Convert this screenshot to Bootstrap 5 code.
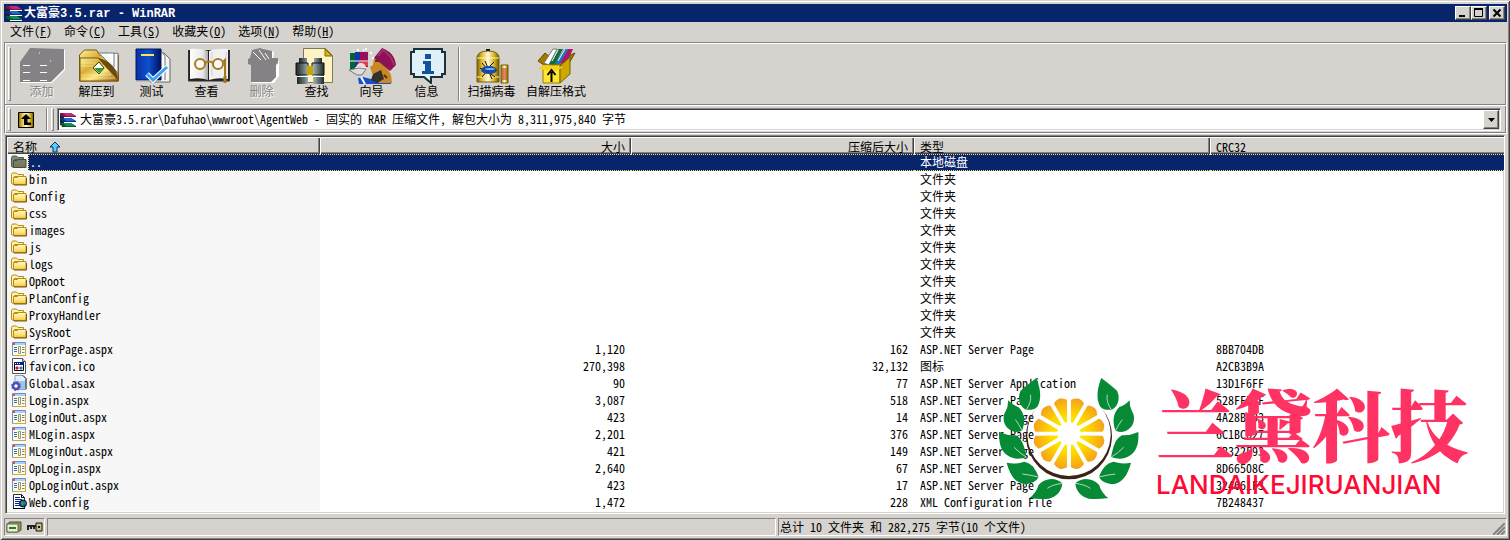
<!DOCTYPE html>
<html lang="zh-CN">
<head>
<meta charset="utf-8">
<meta name="viewport" content="width=device-width, initial-scale=1">
<title>大富豪3.5.rar - WinRAR</title>
<link href="https://cdn.jsdelivr.net/npm/bootstrap@5.3.0/dist/css/bootstrap.min.css" rel="stylesheet">
<style>
:root{--face:#d6d3ce;--navy:#08246b;--shade:#848284;--dark:#424142}
body{font-family:"Noto Sans Mono CJK SC","Liberation Mono","Noto Sans CJK SC",monospace;font-size:12px;line-height:17px;color:#000;background:var(--face)}
svg{display:block;flex:none}
.window{background:var(--face);padding:4px 3px 4px 4px;box-shadow:inset 1px 1px var(--face),inset -1px -1px var(--dark),inset 2px 2px #fff,inset -2px -2px var(--shade)}
.titlebar{background:var(--navy);color:#fff;height:18px;padding:0 2px;gap:2px}
.titlebar h1{font-size:12px;line-height:18px;font-weight:700}
.titlebar h1 span{font-family:"Liberation Mono",monospace}
.raised{background:var(--face);border:1px solid;border-color:#fff var(--dark) var(--dark) #fff;box-shadow:inset -1px -1px var(--shade);padding:0;border-radius:0;color:#000}
.winbtn{width:16px;height:14px}
.winbtn.shut{margin-left:2px}
.menubar{height:20px}
.menubar a{color:#000;text-decoration:none;padding:0 6px;line-height:18px;white-space:pre}
.rebar{border:1px solid;border-color:var(--shade) #fff #fff var(--shade);box-shadow:inset 1px 1px #fff,inset -1px -1px var(--shade)}
.grip{width:3px;border:1px solid;border-color:#fff var(--shade) var(--shade) #fff;flex:none}
.toolband{height:62px;padding:4px 3px 3px;border-bottom:1px solid var(--shade)}
.toolband .grip{margin-right:3px}
.tool{width:55px;padding:1px 0 0;border:0;background:none;color:#000;display:flex;flex-direction:column;align-items:center;line-height:14px}
.tool:disabled{color:var(--shade);text-shadow:1px 1px #fff}
.tool.sfx{width:74px}
.toolsep{width:2px;border-left:1px solid var(--shade);border-right:1px solid #fff;margin:0 4px}
.addrband{height:28px;padding:2px 5px 2px 3px;border-top:1px solid #fff}
.up{border:0;background:none;padding:0 7px}
.bandend{width:2px;border-left:1px solid var(--shade);border-right:1px solid #fff;margin:0 3px 0 5px}
.sunken{border:1px solid;border-color:var(--shade) #fff #fff var(--shade);box-shadow:inset 1px 1px var(--dark),inset -1px -1px var(--face)}
.addr{background:#fff;padding:1px 1px 1px 2px;margin-left:3px}
.addr select{appearance:none;border:0;background:transparent;padding:0 4px 2px;color:#000;outline:0;height:18px;line-height:16px}
.drop{width:16px;display:flex;align-items:center;justify-content:center}
.list{background:#fff;margin:1px 2px 0 1px;padding:1px 0 0 1px;overflow:hidden}
.files{table-layout:fixed;margin:0;color:#000;border-collapse:separate;border-spacing:0}
.files.table>:not(caption)>*>*{padding:0 6px;line-height:15px;height:17px;border:0;box-shadow:none;color:#000;white-space:pre}
.files.table>thead>tr>th{background:var(--face);font-weight:400;box-shadow:inset 1px 1px #fff,inset -1px -1px var(--dark),inset -2px -2px var(--shade)}
.files.table>thead>tr>th:last-child{box-shadow:inset 1px 1px #fff,inset 0 -1px var(--dark),inset 0 -2px var(--shade)}
.files.table>tbody>tr>td:first-child{background:#f7f7f7;padding:0 0 0 4px}
.files tbody td:first-child>div{display:flex;height:17px}
.files tbody td:first-child svg{margin-right:1px}
.files tbody td:first-child span{flex:1;padding-left:1px}
.files.table>tbody>tr.chosen>td:not(:first-child),.files .chosen td:first-child span{background:var(--navy);border-top:1px dotted #ffdf63;border-bottom:1px dotted #ffdf63;line-height:13px;color:#fff}
.files .chosen td:first-child span{border-left:1px dotted #ffdf63}
.statusbar{margin-top:4px;gap:2px}
.pane{border:1px solid;border-color:var(--shade) #fff #fff var(--shade);height:18px;line-height:15px;padding:0 1px}
.brand{position:absolute;right:36px;bottom:10px;display:flex;gap:17px;pointer-events:none}
.brand strong{display:block;font-family:"Noto Serif CJK SC","Noto Sans CJK SC",serif;font-weight:900;font-size:78px;line-height:90px;color:#ff3363}
.brand em{display:block;font-family:Inter,sans-serif;font-style:normal;font-weight:500;font-size:26px;line-height:36px;color:#ff0a35}
</style>
</head>
<body>
<svg width="0" height="0" class="position-absolute" aria-hidden="true">
<defs>
<linearGradient id="gold" x2="1" y2="1"><stop stop-color="#fff3a0"/><stop offset=".35" stop-color="#d8ac35"/><stop offset=".6" stop-color="#ffe681"/><stop offset="1" stop-color="#8b5b0a"/></linearGradient>
<linearGradient id="can"><stop stop-color="#7b6100"/><stop offset=".2" stop-color="#d9b62a"/><stop offset=".5" stop-color="#fffbe0"/><stop offset=".8" stop-color="#d4ad16"/><stop offset="1" stop-color="#6d5200"/></linearGradient>
<linearGradient id="tube"><stop stop-color="#222"/><stop offset=".3" stop-color="#6f8082"/><stop offset=".5" stop-color="#ccd8d8"/><stop offset="1" stop-color="#1e2a2c"/></linearGradient>
<linearGradient id="blue"><stop stop-color="#0830a0"/><stop offset=".5" stop-color="#1050d0"/><stop offset="1" stop-color="#001060"/></linearGradient>
<linearGradient id="fold" x2="0" y2="1"><stop stop-color="#fffbc8"/><stop offset=".6" stop-color="#ffe27a"/><stop offset="1" stop-color="#f2c440"/></linearGradient>
<linearGradient id="leafpage"><stop stop-color="#fff"/><stop offset=".7" stop-color="#e8e8e8"/><stop offset="1" stop-color="#aaa"/></linearGradient>
<radialGradient id="juice" gradientUnits="userSpaceOnUse" cx="0" cy="0" r="112"><stop offset=".2" stop-color="#fff200"/><stop offset=".55" stop-color="#ffd400"/><stop offset="1" stop-color="#f39c1f"/></radialGradient>
<symbol id="i-rar" viewBox="0 0 16 16"><path d="M3 4v11M1 3v10" stroke="#222" stroke-width="2"/><path d="M0 1h11l5 3v1H4L0 3z" fill="#8c0c52"/><path d="M3 1h8l4 3H6z" fill="#b5307a"/><path d="M0 6h11l5 3v1H4L0 8z" fill="#08308c"/><path d="M3 6h8l4 3H6z" fill="#2468c8"/><path d="M0 11h11l5 3v1H4l-4-2z" fill="#055a2b"/><path d="M3 11h8l4 3H6z" fill="#148c58"/><path d="M4 5.500h12M4 10.500h12M4 15.500h12" stroke="#fff"/></symbol>
<symbol id="i-folder" viewBox="0 0 16 16"><path d="M.5 12.500V3.500l1-1.500h4l1.500 1.500h5.500v2h-9l-1 8z" fill="#fff2a8" stroke="#b58c18"/><path d="M2.500 13.500V6.500h4l1-1h7.500v8z" fill="url(#fold)" stroke="#b58c18"/><path d="M3 14h12.500V7" fill="none" stroke="#7b5a08"/></symbol>
<symbol id="i-dark" viewBox="0 0 16 16"><path d="M.5 12.500V3.500l1-1.500h4l1.500 1.500h5.500v2h-9l-1 8z" fill="#7b8a84" stroke="#555a48"/><path d="M2.500 13.500V6.500h4l1-1h7.500v8z" fill="#73806c" stroke="#4c4c34"/><path d="M4 11.500h10" stroke="#7d7654" stroke-width="3"/></symbol>
<symbol id="i-aspx" viewBox="0 0 16 16"><path d="M1.500 1.500h13v13h-13z" fill="#fffde8" stroke="#6f8cba"/><path d="M2 14.500h12.500V4" fill="none" stroke="#cfa640"/><path d="M2 2h12v2H2z" fill="#a9d1ff"/><path d="M2 3h2" stroke="#e44" stroke-width="2"/><path d="M3 6.500h3M3 8.500h3M3 10.500h3" stroke="#3b68b8"/><path d="M7.500 5.500h2v7h-2z" fill="#fff3b0" stroke="#8f9a80"/><path d="M11 6.500h2.500M11 8.500h2.500M11 11.500h2.500" stroke="#6f84a0"/></symbol>
<symbol id="i-ico" viewBox="0 0 16 16"><path d="M1.500.5h10l3 3v12h-13z" fill="#fff" stroke="#555"/><path d="M11.500.5v3h3" fill="#ccc" stroke="#555"/><path d="M3.500 4.500h9v8h-9z" fill="#fff" stroke="#000"/><path d="M3 4h10v3H3z" fill="#08208c"/><path d="M4 5.500h1M6 5.500h1M8 5.500h1" stroke="#fff"/><path d="M6 8l2 2-2 2-2-2z" fill="#e01010"/><path d="M10 8l2 2-2 2-2-2z" fill="#1080c0"/></symbol>
<symbol id="i-asax" viewBox="0 0 16 16"><path d="M4 .5h8l3 3v11H4z" fill="#e2eefb" stroke="#8aa"/><path d="M6 6h9v8H8z" fill="#9cc4ea"/><path d="M12 .5l3 3V14" fill="none" stroke="#233"/><circle cx="5" cy="11" r="3" fill="#fff" stroke="#4f4fb5" stroke-width="2.500"/><circle cx="5" cy="11" r="4.500" fill="none" stroke="#5757bd" stroke-dasharray="1.800 1.700"/></symbol>
<symbol id="i-conf" viewBox="0 0 16 16"><path d="M2.500.5h8l3 3v11h-11z" fill="#fff" stroke="#333"/><path d="M10.500.5v3h3M2 14.500h12" fill="none" stroke="#000"/><path d="M4 3.500h5M4 5.500h7M4 7.500h6M4 9.500h4M4 11.500h5" stroke="#08208c"/><circle cx="12" cy="9.500" r="3.500" fill="#1050c0" stroke="#003"/><path d="M10 8l2-1 1 3-2 2zM13 7l2 2-1 2z" fill="#23b320"/></symbol>
<symbol id="leaves" viewBox="15 27 420 372" overflow="visible"><g fill="#078a36"><path d="M127 30C138 58 145 92 130 116Q118 128 96 125C75 116 70 86 80 68Q98 52 127 30Z"/><path d="M42 97Q56 112 73 117C93 135 94 165 84 188Q62 197 45 184C26 170 25 145 35 130Q43 115 42 97Z"/><path d="M16 192Q40 203 65 202C88 213 92 243 98 267Q65 280 40 262C20 248 14 225 16 192Z"/><path d="M38 284Q65 290 90 281C112 285 125 302 134 327Q125 345 95 349C65 346 48 322 38 284Z"/><path d="M106 390Q126 376 134 350C153 332 180 325 205 346C204 370 185 388 165 392Q140 395 106 390Z"/></g><path d="M97 125Q114 100 109 80M84 188Q76 170 64 155M97 267Q80 258 60 238M134 327Q105 320 85 318M205 346Q175 350 160 361" fill="none" stroke="#fff" stroke-width="2"/></symbol>
<path id="wedge" d="M38 0L98 -16Q104 -9 105 0Q104 9 98 16Z" fill="url(#juice)" stroke="url(#juice)" stroke-width="8" stroke-linejoin="round"/>
</defs>
</svg>

<main class="window min-vh-100 d-flex flex-column">
<header class="titlebar d-flex align-items-center">
<svg width="16" height="16"><use href="#i-rar"/></svg>
<h1 class="m-0 flex-grow-1">大富豪<span>3.5.rar - WinRAR</span></h1>
<div class="d-flex">
<button class="raised winbtn" aria-label="最小化"><svg width="14" height="12"><path d="M3 9h6" stroke="#000" stroke-width="2"/></svg></button>
<button class="raised winbtn" aria-label="最大化"><svg width="14" height="12"><path d="M2.500 2v7.500h8V2" fill="none" stroke="#000"/><path d="M2 2h9" stroke="#000" stroke-width="2"/></svg></button>
<button class="raised winbtn shut" aria-label="关闭"><svg width="14" height="12"><path d="M3.500 2.500l7 7m0-7l-7 7" stroke="#000" stroke-width="2"/></svg></button>
</div>
</header>

<nav class="menubar d-flex" aria-label="菜单"><a href="#">文件(<u>F</u>)</a><a href="#">命令(<u>C</u>)</a><a href="#">工具(<u>S</u>)</a><a href="#">收藏夹(<u>O</u>)</a><a href="#">选项(<u>N</u>)</a><a href="#">帮助(<u>H</u>)</a></nav>

<section class="rebar">
<div class="toolband d-flex" role="toolbar" aria-label="工具栏">
<span class="grip"></span>
<button class="tool" disabled><svg width="48" height="36"><path d="M13 1l34 1v20L34 35H3V15z" fill="#fff"/><path d="M12 0l34 1v20L33 34H2V14z" fill="#848284"/><path d="M5 17.500h7M22 17.500h7M5 24.500h7M22 24.500h7M5 32.500h7M22 32.500h7M32 13h1M21 5h1" stroke="#fff"/></svg>添加</button>
<button class="tool"><svg width="48" height="36"><path d="M6.500 33V7l5-5h12l3 5h19v26z" fill="url(#gold)" stroke="#7b5708"/><path d="M25 5h8l3 1 9-1v20L30 9z" fill="#f7f7f7" stroke="#777"/><path d="M33 5h8v14" fill="#fff" stroke="#637f94"/><path d="M7 10h18c7 3 13 10 20 21v2H7z" fill="url(#gold)" stroke="#7b5708"/><path d="M25 10c6 8 12 13 20 22-1-13-9-20-20-22z" fill="#694b0c"/><path d="M8 15h15M8 18h12M8 27h30M8 30h34" stroke="#fff0a0" opacity=".6"/><path d="M26 14l5 6-5 6-6-6z" fill="#fff" stroke="#3d4510"/><path d="M26 25l-5-5h10z" fill="#2d9b35"/></svg>解压到</button>
<button class="tool"><svg width="48" height="36"><path d="M27 5h9l6 6v23H22z" fill="#f4f4f4" stroke="#666"/><path d="M25 3h8l4 5v24" fill="#fff" stroke="#777"/><path d="M8 1h25v31H8z" fill="url(#blue)" stroke="#001858"/><path d="M13 7h13" stroke="#ffe15c" stroke-width="2"/><path d="M8 33h25" stroke="#aaa"/><path d="M19 26l6 6 14-13" fill="none" stroke="#fff" stroke-width="5"/><path d="M19 26l6 6 14-13" fill="none" stroke="#3aa0ef" stroke-width="3"/></svg>测试</button>
<button class="tool"><svg width="48" height="36"><path d="M5.500 2v31h41V2" fill="#222" stroke="#333"/><path d="M7 1q11-1 18 2v29q-8-3-18-1z" fill="url(#leafpage)"/><path d="M45 1q-12-1-19 2v29q9-3 19-1z" fill="#f1f1f1"/><path d="M29 4v24M43 4v24" stroke="#d0d0d0"/><g fill="#fff" stroke="#a97818" stroke-width="2"><circle cx="17" cy="16" r="5"/><circle cx="35" cy="16" r="5"/><path d="M22 15q4-3 8 0M40 14l2-2v17" fill="none"/></g><path d="M42 28v7" stroke="#a97818" stroke-width="3"/></svg>查看</button>
<button class="tool" disabled><svg width="48" height="36"><path d="M16 3l8-3 12 4-1 8 6 1v15l-5 7H14V17l-2-5z" fill="#fff"/><path d="M14 2l8-2 12 3v7h6v5l-2 2v12l-5 5H13V17l-3-1v-5l2-1z" fill="#848284"/><path d="M15 4l8 8M21 2l7 10M27 5l4 6" stroke="#fff"/></svg>删除</button>
<button class="tool"><svg width="48" height="36"><path d="M10.500.5h22l7 7v27h-29z" fill="#fff2c4" stroke="#7b7b50"/><path d="M32 1v7h7z" fill="#e0b400" stroke="#7b6a10"/><path d="M6 10h8v5H6zM21 10h8v5h-8z" fill="url(#tube)"/><path d="M3 15h12v12H3zM19 15h12v12H19z" fill="url(#tube)" stroke="#111"/><path d="M14 18h6v9h-6z" fill="#c6a700"/><path d="M4 27h11v9H4zM20 27h11v9H20z" fill="url(#tube)"/><path d="M4 28.500h11M20 28.500h11" stroke="#fff"/></svg>查找</button>
<button class="tool"><svg width="48" height="36"><path d="M2 5h5v16H2z" fill="#063"/><path d="M7 4h5v15H7z" fill="#1537a5"/><path d="M12 4h8v15h-8z" fill="#981055"/><path d="M2 13h18" stroke="#fff"/><path d="M10 14h10v4H10z" fill="#e63c45"/><circle cx="13" cy="20" r="5" fill="#fff" opacity=".8"/><path d="M1 22l10-2 7 1-4 6H9z" fill="#ddd" stroke="#777"/><path d="M11 36l-1-6 5-1 8 2 20-3v8z" fill="#1a4fc8"/><path d="M26 10l12 8 5 9 1 8H31l-7-10-2-6 3-2z" fill="#c98822"/><path d="M25 26l8-4 3 9-7 4-6-3z" fill="#34302e"/><path d="M27 13h4M36 27l3 3" stroke="#5c3208" stroke-width="2"/><path d="M26 10L34 0c8 3 13 8 14 17l-6 6-11-9z" fill="#8b1355"/><path d="M30 8l5-6c5 3 9 8 11 15" fill="none" stroke="#a52d70" stroke-width="2"/><path d="M13 29l4 7" stroke="#fff" stroke-width="2"/><path d="M9 2h2M17 1h2M22 5h2M24 10h2M15 2h1" stroke="#fff" stroke-width="2"/></svg>向导</button>
<button class="tool"><svg width="48" height="36"><path d="M11 1h28v3h3v22h-3v3H28v6l-7-6H11v-3H8V4h3z" fill="#dff1f7" stroke="#18313a" stroke-width="2"/><path d="M22 6h6v5h-6zM20 13h8v10h3v3H19v-3h3v-7h-2z" fill="#10529c"/></svg>信息</button>
<span class="toolsep"></span>
<button class="tool"><svg width="48" height="36"><path d="M18 1h4v4h-4z" fill="#111"/><path d="M9 9q1-6 11-6t11 6v25H9z" fill="url(#can)" stroke="#705c10"/><path d="M33 17h7v18h-7z" fill="url(#can)" stroke="#705c10"/><path d="M34 20h5v12h-5z" fill="#c64b32" opacity=".65"/><path d="M9 10h22M9 29h22" stroke="#fff8a8"/><path d="M14 15l5 6 7-7M14 29l5-6 8 6M17 13l3 7M24 31l-3-7M12 20l4 2" fill="none" stroke="#111"/><ellipse cx="21" cy="22" rx="8" ry="4" fill="#164aa3"/><ellipse cx="22" cy="21" rx="5" ry="1" fill="#74aff0"/></svg>扫描病毒</button>
<button class="tool sfx"><svg width="48" height="36"><path d="M6 13l7-8 10 8 20-8-7 12H12z" fill="#9c7c00" stroke="#625000"/><path d="M12 15L21 1h4l-8 16z" fill="#fff" stroke="#777"/><path d="M17 16L26 1h5l-8 16z" fill="#126d43"/><path d="M23 16L32 1h4l-8 15z" fill="#1b78bf"/><path d="M28 15L36 1h5l-7 15z" fill="#a41772"/><path d="M20 13l6-11M26 13l7-12" stroke="#fff"/><path d="M11 17h17v18H11z" fill="#ffe52f" stroke="#968000"/><path d="M28 18l10-9v17l-10 9z" fill="#cda900" stroke="#756000"/><path d="M11 17l-5 4 18 2 7-4z" fill="#f7cf20"/><path d="M19.500 34V24M15.500 27l4-5 4 5" fill="none" stroke="#000" stroke-width="2"/></svg>自解压格式</button>
</div>
<div class="addrband d-flex align-items-stretch">
<span class="grip"></span>
<button class="up" aria-label="向上一级"><svg width="16" height="16"><path d="M.5.5h15v15H.5z" fill="url(#can)" stroke="#000"/><path d="M8 2L3 7h3v6h7v-2.500H9.500V7H13z" fill="#000"/></svg></button>
<span class="bandend"></span><span class="grip"></span>
<div class="addr sunken flex-grow-1 d-flex align-items-center">
<svg width="16" height="16"><use href="#i-rar"/></svg>
<select class="flex-grow-1" aria-label="地址"><option>大富豪3.5.rar\Dafuhao\wwwroot\AgentWeb - 固实的 RAR 压缩文件, 解包大小为 8,311,975,840 字节</option></select>
<button class="raised drop h-100" aria-label="展开"><svg width="7" height="4"><path d="M0 0h7L3.500 4z"/></svg></button>
</div>
</div>
</section>

<section class="list sunken flex-grow-1 position-relative">
<table class="table files">
<colgroup><col style="width:313px"><col style="width:311px"><col style="width:283px"><col style="width:296px"><col></colgroup>
<thead><tr><th><span class="d-flex gap-2 align-items-center">名称<svg class="ms-1" width="12" height="12"><path d="M6 1l5 5H8v5H4V6H1z" fill="#4fd2ff" stroke="#08306b"/></svg></span></th><th class="text-end">大小</th><th class="text-end">压缩后大小</th><th>类型</th><th>CRC32</th></tr></thead>
<tbody id="entries"></tbody>
</table>
<div class="brand">
<svg width="140" height="124" viewBox="15 27 420 372"><path d="M128 120A129 129 0 1 0 322 120A125 125 0 1 1 128 120Z" fill="#3a2418"/>
<g transform="translate(225 197)"><circle r="104" fill="#fff"/><use href="#wedge" transform="rotate(15)"/><use href="#wedge" transform="rotate(45)"/><use href="#wedge" transform="rotate(75)"/><use href="#wedge" transform="rotate(105)"/><use href="#wedge" transform="rotate(135)"/><use href="#wedge" transform="rotate(165)"/><use href="#wedge" transform="rotate(195)"/><use href="#wedge" transform="rotate(225)"/><use href="#wedge" transform="rotate(255)"/><use href="#wedge" transform="rotate(285)"/><use href="#wedge" transform="rotate(315)"/><use href="#wedge" transform="rotate(345)"/></g>
<use href="#leaves" x="15" y="27" width="420" height="372"/><use href="#leaves" x="15" y="27" width="420" height="372" transform="translate(449 0) scale(-1 1)"/></svg>
<div><strong>兰黛科技</strong><em>LANDAIKEJIRUANJIAN</em></div>
</div>
</section>

<footer class="statusbar d-flex">
<div class="pane d-flex align-items-center gap-1"><svg width="16" height="12"><path d="M1 3l3-2h11v8l-3 2H1z" fill="#8a9663" stroke="#4a5230"/><path d="M1 3h11v8H1z" fill="#e9efd0" stroke="#66704a"/><path d="M3 7h7" stroke="#287a30" stroke-width="2"/></svg><svg width="17" height="12"><path d="M1 5h9M2 5v4M5 5v3M8 5v3" stroke="#222" stroke-width="2"/><path d="M10 2h6v8h-6z" fill="#cbbf82" stroke="#111"/><path d="M12 5h2v2h-2z" fill="#111"/></svg></div>
<div class="pane flex-fill w-50"></div>
<div class="pane flex-fill w-50 d-flex justify-content-between"><span>总计 10 文件夹 和 282,275 字节(10 个文件)</span><svg class="align-self-end" width="12" height="12"><path d="M0 12L12 0M4 12l8-8M8 12l4-4" stroke="#848284" stroke-width="2"/></svg></div>
</footer>
</main>
<script src="https://cdn.jsdelivr.net/npm/bootstrap@5.3.0/dist/js/bootstrap.bundle.min.js"></script>
<script>
const page = 'ASP.NET Server Page';
const folders = ['bin', 'Config', 'css', 'images', 'js', 'logs', 'OpRoot', 'PlanConfig', 'ProxyHandler', 'SysRoot'];
const entries = [
  ['dark', '..', '', '', '本地磁盘', ''],
  ...folders.map(name => ['folder', name, '', '', '文件夹', '']),
  ['aspx', 'ErrorPage.aspx', '1,120', '162', page, '8BB704DB'],
  ['ico', 'favicon.ico', '270,398', '32,132', '图标', 'A2CB3B9A'],
  ['asax', 'Global.asax', '90', '77', 'ASP.NET Server Application', '13D1F6FF'],
  ['aspx', 'Login.aspx', '3,087', '518', page, '528FFFFF'],
  ['aspx', 'LoginOut.aspx', '423', '14', page, '4A28BF93'],
  ['aspx', 'MLogin.aspx', '2,201', '376', page, '6C1BC627'],
  ['aspx', 'MLoginOut.aspx', '421', '149', page, '3B322F93'],
  ['aspx', 'OpLogin.aspx', '2,640', '67', page, '8D66508C'],
  ['aspx', 'OpLoginOut.aspx', '423', '17', page, '324661F3'],
  ['conf', 'Web.config', '1,472', '228', 'XML Configuration File', '7B248437']
];
document.getElementById('entries').innerHTML = entries.map(([icon, name, size, packed, type, crc]) =>
  `<tr class="${name === '..' ? 'chosen' : ''}"><td><div><svg width="16" height="16"><use href="#i-${icon}"/></svg><span>${name}</span></div></td><td class="text-end">${size}</td><td class="text-end">${packed}</td><td>${type}</td><td>${crc}</td></tr>`).join('');
</script>
</body>
</html>
